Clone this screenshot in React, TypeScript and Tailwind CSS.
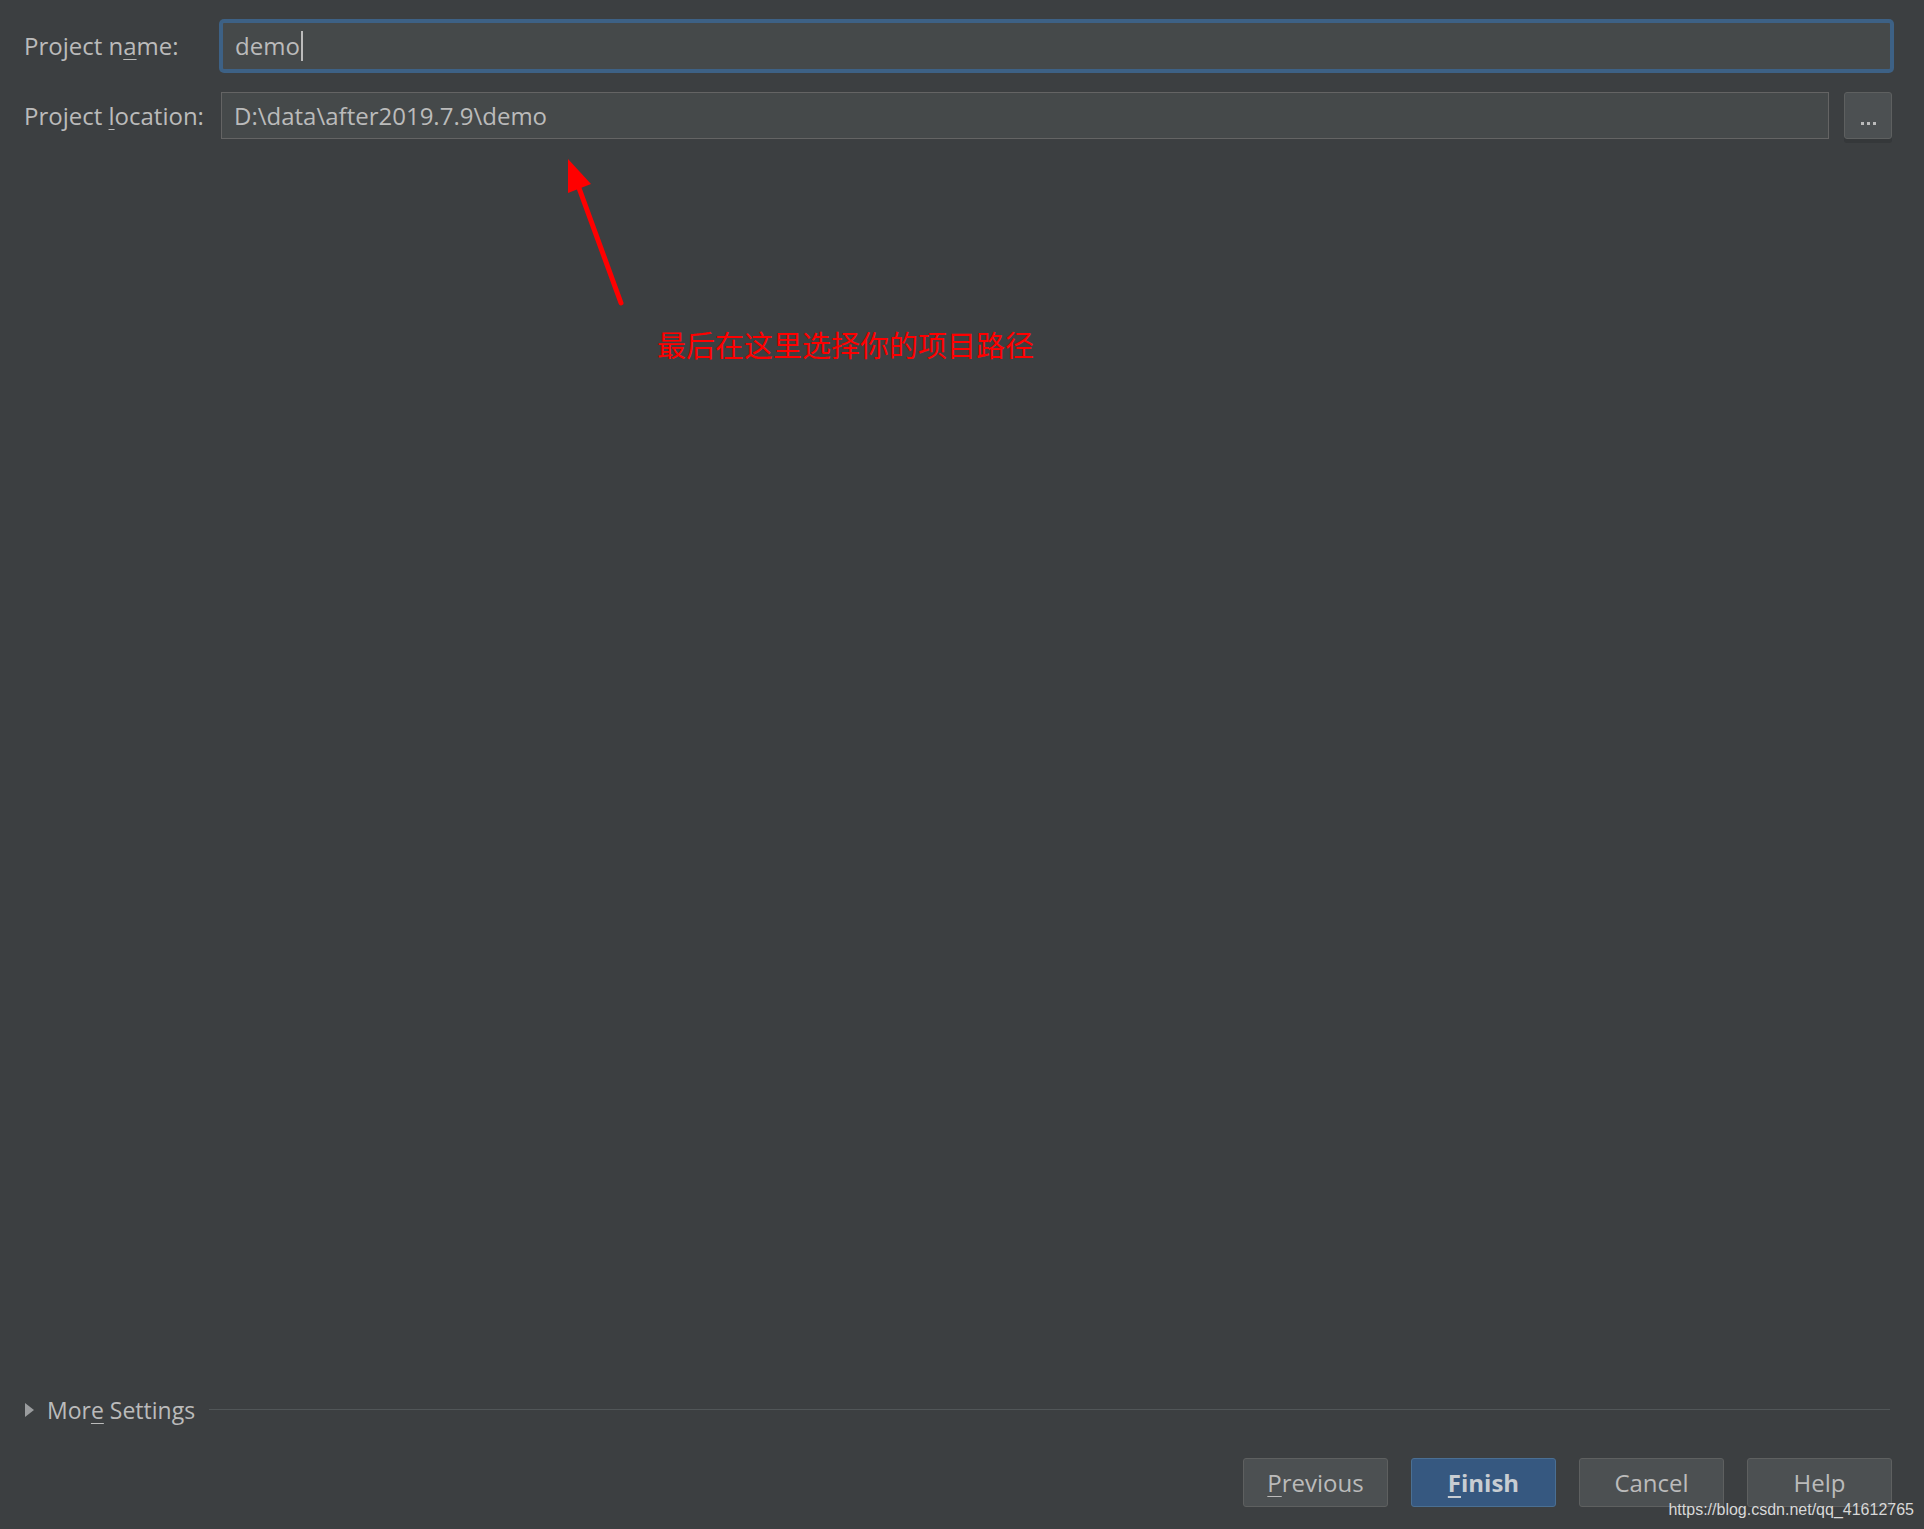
import React from 'react'

const font = { fontFamily: '"Open Sans", "Noto Sans", sans-serif' }

function Field({ label, children }: { label: [string, string, string]; children: React.ReactNode }) {
  return (
    <div className="flex items-center">
      <div className="w-[197px] shrink-0 text-[24px] text-[#bbbbbb]">
        {label[0]}
        <span className="underline underline-offset-[4px] decoration-1">{label[1]}</span>
        {label[2]}
      </div>
      {children}
    </div>
  )
}

function Button({ children, primary }: { children: React.ReactNode; primary?: boolean }) {
  return (
    <button
      className={
        'h-[49px] w-[145px] rounded-[3px] border text-[24px] ' +
        (primary
          ? 'bg-[#365880] border-[#4a6f93] font-bold text-[#c8cdd2]'
          : 'bg-[#4c5052] border-[#5e6060] text-[#bbbbbb]')
      }
    >
      {children}
    </button>
  )
}

export default function App() {
  return (
    <div className="relative flex h-[1529px] w-[1924px] flex-col bg-[#3c3f41]" style={font}>
      {/* form */}
      <div className="flex flex-col gap-[21px] pl-[24px] pr-[32px] pt-[21px]">
        <Field label={['Project n', 'a', 'me:']}>
          <div className="flex h-[50px] flex-1 items-center rounded-[3px] border-2 border-[#3d6185] bg-[#45494a] px-[12px] text-[24px] text-[#bbbbbb] ring-2 ring-[#3d6185]">
            demo
            <span className="ml-[1px] inline-block h-[30px] w-[2px] bg-[#bbbbbb]" />
          </div>
        </Field>
        <Field label={['Project ', 'l', 'ocation:']}>
          <div className="flex h-[47px] flex-1 items-center border border-[#646464] bg-[#45494a] px-[12px] text-[24px] text-[#bbbbbb]">
            D:\data\after2019.7.9\demo
          </div>
          <div className="ml-[15px] flex h-[47px] w-[48px] shrink-0 items-end justify-center rounded-[3px] border border-[#5e6060] bg-[#4c5052] pb-[13px] shadow-[0_4px_0_#35383a]">
            <div className="flex gap-[3px]">
              <span className="h-[3px] w-[3px] bg-[#bbbbbb]" />
              <span className="h-[3px] w-[3px] bg-[#bbbbbb]" />
              <span className="h-[3px] w-[3px] bg-[#bbbbbb]" />
            </div>
          </div>
        </Field>
      </div>

      <div className="flex-1" />

      {/* more settings */}
      <div className="flex items-center pl-[24px] pr-[34px]">
        <svg width="11" height="16" viewBox="0 0 11 16" className="mr-[12px]">
          <path d="M1 1 L10 8 L1 15 Z" fill="#9a9c9e" />
        </svg>
        <span className="text-[23px] text-[#bbbbbb]">
          Mor<span className="underline underline-offset-[4px] decoration-1">e</span> Settings
        </span>
        <div className="ml-[14px] h-px flex-1 bg-[#515658]" />
      </div>

      {/* buttons */}
      <div className="flex justify-end gap-[23px] pb-[22px] pr-[32px] pt-[31px]">
        <Button>
          <span className="underline underline-offset-[4px] decoration-1">P</span>revious
        </Button>
        <Button primary>
          <span className="underline underline-offset-[4px] decoration-2">F</span>inish
        </Button>
        <Button>Cancel</Button>
        <Button>Help</Button>
      </div>

      {/* annotation */}
      <svg className="absolute left-0 top-0" width="1924" height="400" viewBox="0 0 1924 400">
        <line x1="621" y1="303" x2="579" y2="188" stroke="#ff0000" strokeWidth="5" strokeLinecap="round" />
        <polygon points="568,159 568,193 591,184" fill="#ff0000" />
      </svg>
      <div
        className="absolute left-[657px] top-[327px] text-[29px] leading-[35px] text-[#ff0000]"
        style={{ fontFamily: '"Noto Sans CJK SC", sans-serif' }}
      >
        最后在这里选择你的项目路径
      </div>

      <div
        className="absolute bottom-[7px] right-[10px] text-[16px] text-[#d8d8d8]"
        style={{ fontFamily: '"Liberation Sans", Arial, sans-serif' }}
      >
        https://blog.csdn.net/qq_41612765
      </div>
    </div>
  )
}
